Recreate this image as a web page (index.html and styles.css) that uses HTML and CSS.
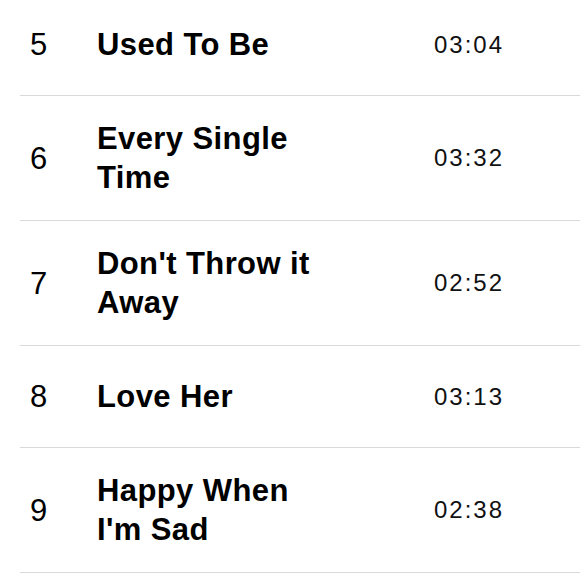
FILE: index.html
```html
<!DOCTYPE html>
<html>
<head>
<meta charset="utf-8">
<link rel="stylesheet" href="styles.css">
</head>
<body>
<ul class="tracks">
  <li class="row"><span class="num">5</span><span class="title">Used To Be</span><span class="dur">03:04</span></li>
  <li class="row"><span class="num">6</span><span class="title">Every Single Time</span><span class="dur">03:32</span></li>
  <li class="row"><span class="num">7</span><span class="title">Don't Throw it Away</span><span class="dur">02:52</span></li>
  <li class="row"><span class="num">8</span><span class="title">Love Her</span><span class="dur">03:13</span></li>
  <li class="row"><span class="num">9</span><span class="title">Happy When I'm Sad</span><span class="dur">02:38</span></li>
</ul>
</body>
</html>
```

FILE: styles.css
```css
html, body {
  margin: 0;
  padding: 0;
  background: #fff;
}
body {
  font-family: "Liberation Sans", Arial, sans-serif;
  color: #000;
  overflow: hidden;
}
.tracks {
  list-style: none;
  margin: -6px 0 0 20px;
  padding: 0;
}
.row {
  box-sizing: border-box;
  min-height: 102px;
  padding: 23px 0;
  display: grid;
  grid-template-columns: 77px 337px 1fr;
  align-items: center;
  border-bottom: 1px solid #d9d9d9;
}
.num {
  padding-left: 10px;
  font-size: 31px;
  line-height: 39px;
}
.title {
  max-width: 230px;
  font-size: 31px;
  font-weight: bold;
  letter-spacing: 0.4px;
  line-height: 39px;
}
.dur {
  font-size: 24px;
  letter-spacing: 2px;
  line-height: 30px;
  color: #111;
}
```
